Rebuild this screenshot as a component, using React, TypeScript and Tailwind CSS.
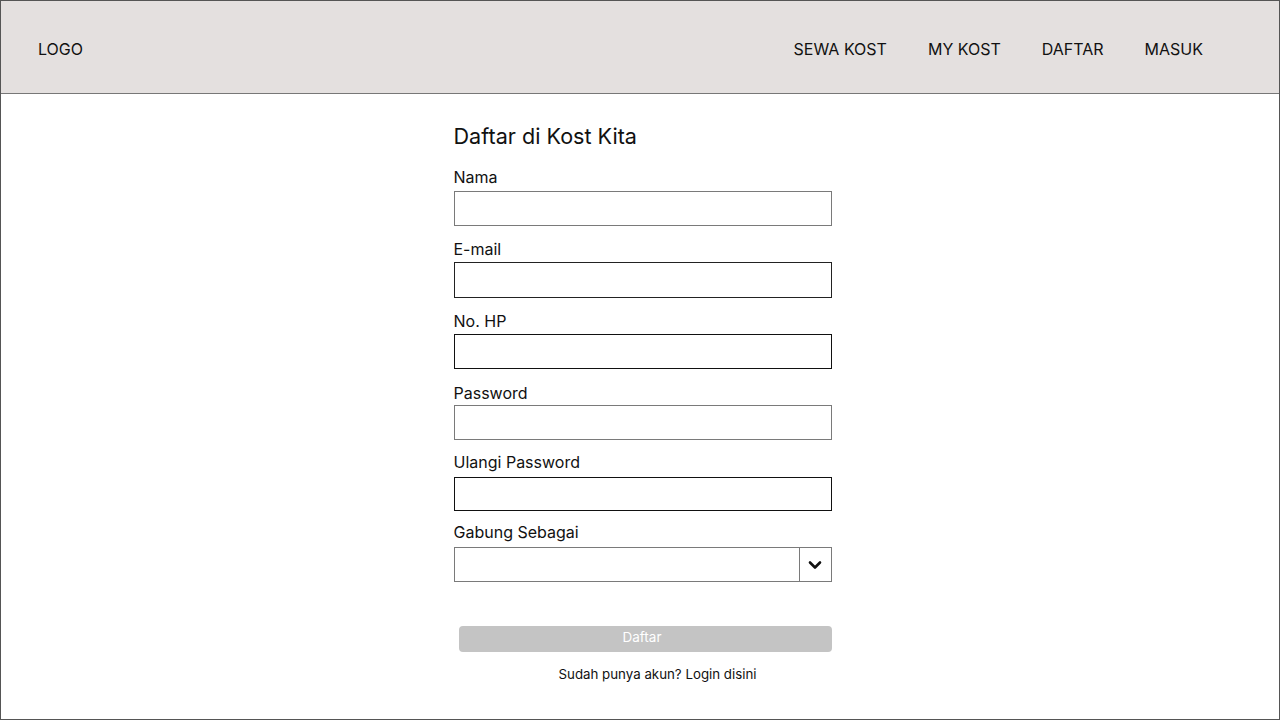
import React, { useState } from "react";

type Field = {
  label: string;
  type: string;
  labelMt: string;
  inputMt: string;
  height: string;
  border: string;
};

const fields: Field[] = [
  { label: "Nama", type: "text", labelMt: "mt-[17px]", inputMt: "mt-[4px]", height: "h-[35px]", border: "border-[#7a7a7a]" },
  { label: "E-mail", type: "email", labelMt: "mt-[13px]", inputMt: "mt-[3px]", height: "h-[36px]", border: "border-[#222]" },
  { label: "No. HP", type: "tel", labelMt: "mt-[13px]", inputMt: "mt-[3px]", height: "h-[35px]", border: "border-[#111]" },
  { label: "Password", type: "password", labelMt: "mt-[14px]", inputMt: "mt-[2px]", height: "h-[35px]", border: "border-[#7a7a7a]" },
  { label: "Ulangi Password", type: "password", labelMt: "mt-[12px]", inputMt: "mt-[5px]", height: "h-[34px]", border: "border-[#111]" },
];

const navItems = ["SEWA KOST", "MY KOST", "DAFTAR", "MASUK"];

export default function App() {
  const [role, setRole] = useState("");

  return (
    <div className="w-[1280px] h-[720px] border border-[#555] bg-white text-[#111] font-['Inter','Noto_Sans',sans-serif] flex flex-col overflow-hidden">
      {/* header */}
      <header className="h-[93px] shrink-0 bg-[#e4e0df] border-b border-[#777] flex items-center justify-between pt-[4px] pl-[37px] pr-[76px]">
        <div className="text-[16px] leading-5">LOGO</div>
        <nav className="flex items-center gap-[41px] text-[16px] leading-5">
          {navItems.map((item) => (
            <a key={item} href="#" className="text-[#111]">
              {item}
            </a>
          ))}
        </nav>
      </header>

      {/* form */}
      <main className="flex-1 flex justify-center pt-[28px] pl-[5px]">
        <form className="w-[378px] flex flex-col" onSubmit={(e) => e.preventDefault()}>
          <h1 className="text-[21.6px] leading-7 font-normal">Daftar di Kost Kita</h1>

          {fields.map((f) => (
            <label key={f.label} className="flex flex-col">
              <span className={`${f.labelMt} text-[16px] leading-5`}>{f.label}</span>
              <input
                type={f.type}
                className={`${f.inputMt} ${f.height} w-full border ${f.border} bg-white px-2 outline-none`}
              />
            </label>
          ))}

          <label className="flex flex-col">
            <span className="mt-[11px] text-[16px] leading-5">Gabung Sebagai</span>
            <div className="mt-[5px] h-[35px] w-full border border-[#7a7a7a] flex">
              <select
                value={role}
                onChange={(e) => setRole(e.target.value)}
                className="flex-1 appearance-none bg-white px-2 outline-none"
              >
                <option value=""></option>
                <option value="penyewa">Penyewa</option>
                <option value="pemilik">Pemilik</option>
              </select>
              <div className="w-[32px] border-l border-[#7a7a7a] flex items-center justify-center">
                <svg width="14" height="10" viewBox="0 0 14 10">
                  <polyline
                    points="2,2.5 7,7.5 12,2.5"
                    fill="none"
                    stroke="#111"
                    strokeWidth="2.6"
                    strokeLinecap="round"
                    strokeLinejoin="round"
                  />
                </svg>
              </div>
            </div>
          </label>

          <button
            type="submit"
            className="mt-[44px] ml-[5px] h-[26px] rounded-[4px] bg-[#c4c4c4] text-white text-[13.5px] leading-4 pb-[4px] pr-[6px]"
          >
            Daftar
          </button>

          <p className="mt-[14px] pl-[105px] text-[13.3px] leading-4">Sudah punya akun? Login disini</p>
        </form>
      </main>
    </div>
  );
}
